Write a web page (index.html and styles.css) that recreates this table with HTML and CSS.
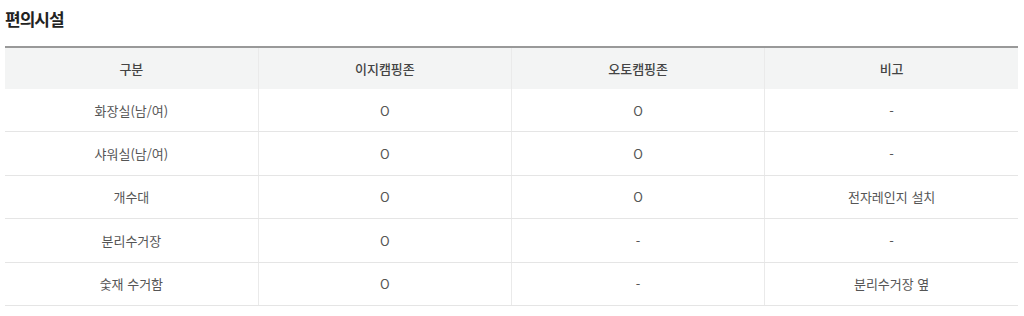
FILE: index.html
```html
<!DOCTYPE html>
<html lang="ko">
<head>
<meta charset="utf-8">
<link rel="stylesheet" href="styles.css">
</head>
<body>
<div class="wrap">
  <h3 class="title">편의시설</h3>
  <table class="facility">
    <thead>
      <tr><th>구분</th><th>이지캠핑존</th><th>오토캠핑존</th><th>비고</th></tr>
    </thead>
    <tbody>
      <tr><td>화장실(남/여)</td><td>O</td><td>O</td><td>-</td></tr>
      <tr><td>샤워실(남/여)</td><td>O</td><td>O</td><td>-</td></tr>
      <tr><td>개수대</td><td>O</td><td>O</td><td>전자레인지 설치</td></tr>
      <tr><td>분리수거장</td><td>O</td><td>-</td><td>-</td></tr>
      <tr><td>숯재 수거함</td><td>O</td><td>-</td><td>분리수거장 옆</td></tr>
    </tbody>
  </table>
</div>
</body>
</html>
```
FILE: styles.css
```css
html, body {
  margin: 0;
  padding: 0;
  background: #fff;
}
body {
  font-family: "Noto Sans CJK KR", "Noto Sans", sans-serif;
  color: #555;
}
.wrap {
  padding: 0 6px 0 5px;
}
.title {
  margin: 0;
  padding-top: 7px;
  height: 39px;
  font-size: 17px;
  line-height: 24px;
  font-weight: 700;
  color: #222;
  letter-spacing: -1px;
}
.facility {
  width: 100%;
  border-collapse: collapse;
  table-layout: fixed;
  border-top: 2px solid #999;
  font-size: 13px;
}
.facility th,
.facility td {
  text-align: center;
  vertical-align: middle;
  border-left: 1px solid #eaeaea;
  padding: 0;
}
.facility th:first-child,
.facility td:first-child {
  border-left: none;
}
.facility th {
  height: 41px;
  background: #f3f4f4;
  font-weight: 500;
  color: #444;
}
.facility td {
  height: 42.4px;
  border-bottom: 1px solid #e5e5e5;
  font-weight: 400;
  color: #555;
}
```
